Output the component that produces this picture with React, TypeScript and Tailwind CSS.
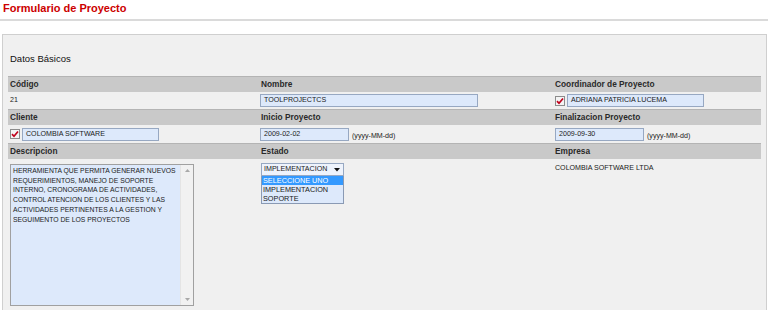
import React from "react";

const F = { fontFamily: '"Liberation Sans", Arial, sans-serif' } as const;

function Check() {
  return (
    <span className="inline-flex h-[10px] w-[10px] shrink-0 items-center justify-center border border-[#8c8c8c] bg-[#f4f4f4]">
      <svg width="8" height="8" viewBox="0 0 8 8">
        <path d="M1 4.2 L3 6.3 L7 1.5" fill="none" stroke="#c0001a" strokeWidth="1.7" />
      </svg>
    </span>
  );
}

function Input({ value, w }: { value: string; w: string }) {
  return (
    <div className={`${w} h-[13px] border border-[#97a8c2] bg-[#dde9fb] pl-[3px] text-[7.1px] leading-[11px] text-[#1a1a1a]`}>
      {value}
    </div>
  );
}

function Header({ a, b, c }: { a: string; b: string; c: string }) {
  return (
    <div className="flex h-[16px] items-center border-t border-[#b4b4b4] bg-[#c9c9c9] text-[8.3px] font-bold text-[#2a2a2a]">
      <div className="w-[251px] pl-[2px]">{a}</div>
      <div className="w-[294px] pl-[2px]">{b}</div>
      <div className="flex-1 pl-[2px]">{c}</div>
    </div>
  );
}

export default function App() {
  return (
    <div style={F} className="h-[310px] w-[768px] overflow-hidden bg-white">
      <div className="h-[19px] pl-[3px] pt-[1px] text-[11px] font-bold leading-[14px] text-[#cc0000]">
        Formulario de Proyecto
      </div>
      <div className="h-[2px] bg-[#dadada]" />
      <div className="ml-[2px] mr-[1px] mt-[13px] h-[300px] border border-[#cfcfcf] bg-[#f0f0f0] px-[5px] pt-[17px]">
        <div className="h-[14px] pl-[2px] text-[9.5px] leading-[14px] text-[#111]">Datos Básicos</div>
        <div className="mt-[10px]">
          <Header a="Código" b="Nombre" c="Coordinador de Proyecto" />
          <div className="flex h-[17px] items-center text-[7.1px] text-[#1a1a1a]">
            <div className="w-[251px] pl-[2px]">21</div>
            <div className="w-[294px] pl-[1px]">
              <Input value="TOOLPROJECTCS" w="w-[218px]" />
            </div>
            <div className="flex flex-1 items-center gap-[2px] pl-[2px]">
              <Check />
              <Input value="ADRIANA PATRICIA LUCEMA" w="w-[137px]" />
            </div>
          </div>
          <Header a="Cliente" b="Inicio Proyecto" c="Finalizacion Proyecto" />
          <div className="flex h-[18px] items-center text-[7.1px] text-[#1a1a1a]">
            <div className="flex w-[251px] items-center gap-[2px] pl-[2px]">
              <Check />
              <Input value="COLOMBIA SOFTWARE" w="w-[137px]" />
            </div>
            <div className="flex w-[294px] items-end gap-[3px] pl-[1px]">
              <Input value="2009-02-02" w="w-[89px]" />
              <span className="leading-[9px]">(yyyy-MM-dd)</span>
            </div>
            <div className="flex flex-1 items-end gap-[3px] pl-[2px]">
              <Input value="2009-09-30" w="w-[89px]" />
              <span className="leading-[9px]">(yyyy-MM-dd)</span>
            </div>
          </div>
          <Header a="Descripcion" b="Estado" c="Empresa" />
          <div className="flex text-[7.1px] text-[#1a1a1a]">
            <div className="w-[251px] pl-[2px] pt-[5px]">
              <div className="flex h-[142px] w-[184px] border border-[#a0a0a0] bg-[#dde9fb]">
                <div className="flex-1 px-[2px] pt-[1px] text-[6.8px] leading-[9.7px]">
                  HERRAMIENTA QUE PERMITA GENERAR NUEVOS REQUERIMIENTOS, MANEJO DE SOPORTE INTERNO, CRONOGRAMA DE ACTIVIDADES, CONTROL ATENCION DE LOS CLIENTES Y LAS ACTIVIDADES PERTINENTES A LA GESTION Y SEGUIMENTO DE LOS PROYECTOS
                </div>
                <div className="flex w-[13px] flex-col items-center justify-between border-l border-[#e4e4e4] bg-[#f1f1f1] py-[4px]">
                  <svg width="5" height="3" viewBox="0 0 5 3"><path d="M0 3 L2.5 0 L5 3Z" fill="#a8a8a8" /></svg>
                  <svg width="5" height="3" viewBox="0 0 5 3"><path d="M0 0 L2.5 3 L5 0Z" fill="#a8a8a8" /></svg>
                </div>
              </div>
            </div>
            <div className="w-[294px] pl-[2px] pt-[4px]">
              <div className="w-[83px]">
                <div className="flex h-[13px] items-center justify-between border border-[#97a8c2] bg-[#eef3fc] pl-[2px] pr-[3px]">
                  <span className="leading-[9px]">IMPLEMENTACION</span>
                  <svg width="6" height="4" viewBox="0 0 6 4"><path d="M0 0 L6 0 L3 3.5Z" fill="#111" /></svg>
                </div>
                <div className="border border-t-0 border-[#8a9ab4] bg-[#dde9fb] text-[7.3px] leading-[9px]">
                  <div className="bg-[#3399ff] pl-[1px] text-white">SELECCIONE UNO</div>
                  <div className="pl-[1px]">IMPLEMENTACION</div>
                  <div className="pl-[1px]">SOPORTE</div>
                </div>
              </div>
            </div>
            <div className="flex-1 pl-[2px] pt-[5px] leading-[9px]">COLOMBIA SOFTWARE LTDA</div>
          </div>
        </div>
      </div>
    </div>
  );
}
